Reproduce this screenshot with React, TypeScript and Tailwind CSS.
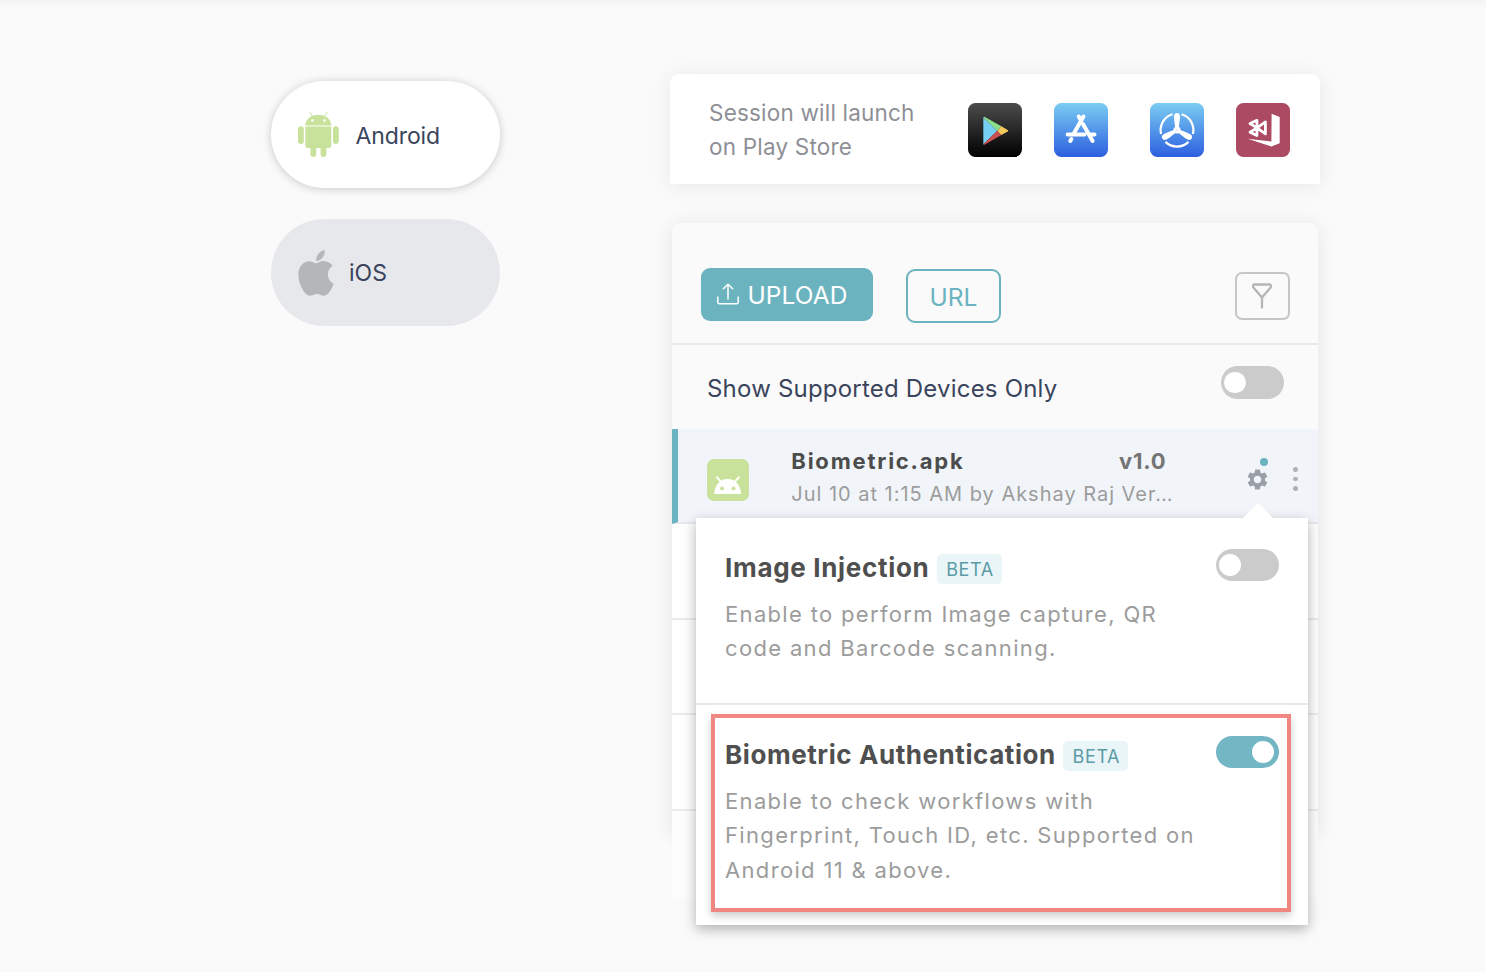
import React from "react";
import { MdSettings } from "react-icons/md";
import { FaApple } from "react-icons/fa";

function AndroidRobot() {
  return (
    <svg width="41" height="45" viewBox="0 0 41 45" fill="#c8e29b" className="shrink-0">
      <path d="M7.3 13.4C7.5 7 13 2.7 20.3 2.7S33.1 7 33.3 13.4Z" />
      <path d="M12 .4l2.3 3.8M29 .4l-2.3 3.8" stroke="#c8e29b" strokeWidth="1" strokeLinecap="round" />
      <path d="M7.3 14.5h26V33a3 3 0 0 1-3 3h-20a3 3 0 0 1-3-3Z" />
      <rect x="0" y="14.3" width="5.8" height="17.7" rx="2.9" />
      <rect x="35" y="14.3" width="5.8" height="17.7" rx="2.9" />
      <path d="M12.4 34h5.8v8a2.9 2.9 0 0 1-5.8 0ZM22.6 34h5.8v8a2.9 2.9 0 0 1-5.8 0Z" />
      <circle cx="14.3" cy="8.5" r="1.3" fill="#fff" />
      <circle cx="26.4" cy="8.5" r="1.3" fill="#fff" />
    </svg>
  );
}

function AndroidTile() {
  return (
    <svg width="42" height="42" viewBox="0 0 42 42" className="shrink-0">
      <rect width="42" height="42" rx="7" fill="#c8e29b" />
      <path d="M7.3 35C7.6 26 13 20 20.7 20S33.7 26 34 35Z" fill="#fff" />
      <path d="M9.8 18.2l4 4.4M31.9 18.2l-4 4.4" stroke="#fff" strokeWidth="2" strokeLinecap="round" />
      <circle cx="15" cy="29.4" r="1.9" fill="#c8e29b" />
      <circle cx="26.6" cy="29.4" r="1.9" fill="#c8e29b" />
    </svg>
  );
}

function PlayStore() {
  return (
    <svg width="54" height="54" viewBox="0 0 54 54">
      <defs>
        <linearGradient id="dark" x1="0" y1="0" x2="0" y2="1">
          <stop offset="0" stopColor="#4c4c4c" />
          <stop offset="1" stopColor="#000" />
        </linearGradient>
      </defs>
      <rect width="54" height="54" rx="7.5" fill="url(#dark)" />
      <path d="M15.3 14.2L29.3 27.7 15.3 41.4Z" fill="#76d0f1" />
      <path d="M15.3 14.2q.6-.9 1.6-.3L33.4 23.3 29.3 27.7Z" fill="#8bdf8b" />
      <path d="M15.3 41.2q.6.9 1.6.3L33.4 32.1 29.3 27.7Z" fill="#cb5051" />
      <path d="M33.4 23.3l6.3 3.6q1.2.8 0 1.6l-6.3 3.6-4.1-4.4Z" fill="#f3c95d" />
    </svg>
  );
}

function AppStore() {
  return (
    <svg width="54" height="54" viewBox="0 0 54 54">
      <defs>
        <linearGradient id="blueA" x1="0" y1="0" x2="0" y2="1">
          <stop offset="0" stopColor="#7acdf3" />
          <stop offset="1" stopColor="#2d5fe0" />
        </linearGradient>
      </defs>
      <rect width="54" height="54" rx="7.5" fill="url(#blueA)" />
      <path
        d="M13.6 31.5H30.5M37 31.5h3.5M29.5 13.6L19.8 30.4M17.4 36l-1.1 1.9M24.8 13.6l1.8 3.1M29 21l9.6 16.9"
        stroke="#fff"
        strokeWidth="4"
        strokeLinecap="round"
        fill="none"
      />
    </svg>
  );
}

function TestFlight() {
  const blade = "M25.5 27C25 21 23.9 17 24 13.2Q24.3 10 27 10T30 13.2C30.1 17 29 21 28.5 27Z";
  return (
    <svg width="54" height="54" viewBox="0 0 54 54">
      <defs>
        <linearGradient id="blueT" x1="0" y1="0" x2="0" y2="1">
          <stop offset="0" stopColor="#7acdf3" />
          <stop offset="1" stopColor="#2d5fe0" />
        </linearGradient>
      </defs>
      <rect width="54" height="54" rx="7.5" fill="url(#blueT)" />
      <g stroke="#fff" strokeWidth="2.2" fill="none">
        <path d="M38.5 38.9A16.4 16.4 0 0 1 15.5 38.9" />
        <path d="M11.1 31A16.4 16.4 0 0 1 22.5 11.3" />
        <path d="M31.5 11.3A16.4 16.4 0 0 1 42.9 31" />
      </g>
      <g fill="#fff">
        <path d={blade} />
        <path d={blade} transform="rotate(120 27 27)" />
        <path d={blade} transform="rotate(240 27 27)" />
        <circle cx="27" cy="27" r="3.6" />
      </g>
      <circle cx="27" cy="27" r="0.7" fill="#bcd3f7" />
    </svg>
  );
}

function AppCenter() {
  return (
    <svg width="54" height="54" viewBox="0 0 54 54">
      <rect width="54" height="54" rx="7.5" fill="#ac4a62" />
      <path d="M35.6 10.8L43.7 14v26.2L35.4 43.6 11.6 35.8 35.4 38.6Z" fill="#fff" />
      <path
        d="M21 24.9L29.4 18.9V30.9ZM21 24.9L20.9 17.3 14 20.6ZM21 24.9L20.9 32.5 14 29.2Z"
        stroke="#fff"
        strokeWidth="2.8"
        strokeLinejoin="round"
        fill="none"
      />
    </svg>
  );
}

function Toggle({ on = false }: { on?: boolean }) {
  return (
    <span
      className={`flex h-[32.5px] w-[63px] shrink-0 items-center rounded-full ${
        on ? "justify-end bg-[#73b6c4] pr-[5.5px]" : "justify-start bg-[#cbcbcb] pl-[3.4px]"
      }`}
    >
      <span className="size-[21.5px] rounded-full bg-white" />
    </span>
  );
}

function Feature({ title, on, spacing, lines }: { title: string; on: boolean; spacing: string; lines: string[] }) {
  return (
    <div className="pl-[29px] pr-[29px]">
      <div className="flex h-[33px] items-center">
        <h3 className={`whitespace-nowrap text-[26px] leading-[33px] font-bold text-[#4f4f4f] ${spacing}`}>{title}</h3>
        <span className="relative top-[2px] ml-[7.5px] flex h-[30.5px] w-[65px] items-center justify-center rounded-[5px] bg-[#eaf5f8] pt-[1.5px] pl-[1px] text-[18px] tracking-[0.6px] text-[#5b9ba6]">
          BETA
        </span>
        <div className="relative -top-[2px] ml-auto">
          <Toggle on={on} />
        </div>
      </div>
      <p className="mt-[13.5px] whitespace-nowrap text-[22px] leading-[34.4px] tracking-[1.33px] text-[#9c9c9c]">
        {lines.map((l) => (
          <span key={l} className="block">
            {l}
          </span>
        ))}
      </p>
    </div>
  );
}

export default function App() {
  return (
    <div className="relative h-[972px] w-[1486px] overflow-hidden bg-[#fafafa] font-['Inter',sans-serif]">
      <div className="absolute inset-x-0 top-0 h-2 bg-linear-to-b from-[#f3f3f3] to-[#fafafa]" />
      <div className="flex pl-[271px]">
        <nav className="mt-[81px] flex w-[229px] flex-col gap-[31px] text-[23px] text-[#3a445c]">
          <button className="flex h-[107px] items-center rounded-full bg-white pl-[27px] shadow-[0_1px_10px_rgba(0,0,0,0.2)]">
            <AndroidRobot />
            <span className="ml-[16.5px] pt-[3px] tracking-[-0.1px]">Android</span>
          </button>
          <button className="flex h-[107px] items-center rounded-full bg-[#e7e8ec] pl-[26.5px]">
            <FaApple preserveAspectRatio="none" className="h-[52px] w-[36px] shrink-0 text-[#b5b6ba]" />
            <span className="ml-[15.5px] pt-[2px]">iOS</span>
          </button>
        </nav>

        <main className="mt-[73.5px] ml-[170px] w-[650px]">
          <section className="flex h-[110.5px] rounded-t-[9px] bg-white pl-[39px] shadow-[0_2px_20px_rgba(0,0,0,0.08)]">
            <p className="w-[259px] pt-[22px] text-[22.5px] leading-[34.3px] tracking-[0.2px] text-[#8e8f96]">
              Session will launch
              <br />
              on Play Store
            </p>
            <div className="flex pt-[29.5px]">
              <PlayStore />
              <div className="ml-[32px]">
                <AppStore />
              </div>
              <div className="ml-[42px]">
                <TestFlight />
              </div>
              <div className="ml-[32px]">
                <AppCenter />
              </div>
            </div>
          </section>

          <section className="relative mt-[38.5px] ml-[2px] h-[612px] w-[646px] rounded-t-[9px] bg-[#fafafa] shadow-[0_2px_20px_rgba(0,0,0,0.09)]">
            <div className="flex h-[122.5px] items-start border-b-2 border-[#e8e8e8] pl-[29px]">
              <button className="mt-[45px] flex h-[53.5px] w-[172px] items-center rounded-[9px] bg-[#6cb3c0] pl-[16px] text-[24.5px] tracking-[0.1px] text-white">
                <svg width="22" height="22" viewBox="0 0 22 22" fill="none" stroke="#fff" strokeWidth="1.5" strokeLinecap="round" strokeLinejoin="round" className="-mt-[1px] shrink-0">
                  <path d="M.8 14v5.2q0 1.6 1.6 1.6h17.2q1.6 0 1.6-1.6V14M11 16V1.2M6.3 5.8L11 1.2l4.7 4.6" />
                </svg>
                <span className="ml-[8.5px] pt-[2px]">UPLOAD</span>
              </button>
              <button className="mt-[46.5px] ml-[33px] flex h-[54px] w-[95px] items-center justify-center rounded-[9px] border-2 border-[#6cb3c0] pt-[2px] text-[24.5px] text-[#6cb3c0]">
                URL
              </button>
              <button className="mt-[49.5px] ml-[234px] flex h-[48px] w-[55px] items-center justify-center rounded-[7px] border-2 border-[#c6c6c8]">
                <svg width="20" height="26" viewBox="0 0 20 26" fill="none" stroke="#b5b5b9" strokeWidth="2.3" strokeLinecap="round" strokeLinejoin="round" className="-ml-px">
                  <path d="M10 24.5V14.5L1.6 4.8Q-.2 1.8 2.4 1.5h15.2q2.6.3.8 3.3L10 14.5" />
                </svg>
              </button>
            </div>

            <div className="flex h-[84px] justify-between pt-[21px] pr-[34px] pl-[35px]">
              <span className="mt-[3px] h-[40px] text-[24px] leading-[40px] tracking-[0.2px] text-[#3a445c]">Show Supported Devices Only</span>
              <Toggle />
            </div>

            <div className="flex h-[95px] items-start border-b-2 border-l-[6px] border-b-[#e6e8ec] border-l-[#6cb3c0] bg-[#f1f5fa] pl-[29px]">
              <div className="mt-[30px]">
                <AndroidTile />
              </div>
              <div className="mt-[16px] ml-[42.3px] w-[383.7px] whitespace-nowrap leading-[32px]">
                <div className="flex justify-between pr-[8.5px] text-[22px] font-bold">
                  <span className="tracking-[1.78px] text-[#4c4c4c]">Biometric.apk</span>
                  <span className="tracking-[0.8px] text-[#747474]">v1.0</span>
                </div>
                <div className="pt-px text-[20px] tracking-[0.98px] text-[#9c9c9c]">Jul 10 at 1:15 AM by Akshay Raj Ver…</div>
              </div>
              <div className="relative mt-[38px] ml-[70px]">
                <MdSettings className="size-[25px] text-[#9ba0a8]" />
                <span className="absolute -top-[8.7px] left-[15px] size-[8px] rounded-full bg-[#6cb3c0]" />
              </div>
              <div className="mt-[38.3px] ml-[23px] flex flex-col gap-[4.5px]">
                <span className="size-[4.8px] rounded-full bg-[#b0b0b0]" />
                <span className="size-[4.8px] rounded-full bg-[#b0b0b0]" />
                <span className="size-[4.8px] rounded-full bg-[#b0b0b0]" />
              </div>
            </div>

            <div className="h-[95.5px] border-b-2 border-[#ebebeb] bg-[#fefefe]" />
            <div className="h-[95.5px] border-b-2 border-[#ebebeb] bg-[#fefefe]" />
            <div className="h-[95.5px] border-b-2 border-[#ebebeb] bg-[#fefefe]" />
            <div className="h-[86px] bg-[#fdfdfd]" />

            <div className="absolute top-[295px] left-[24px] h-[407px] w-[612px] bg-white shadow-[0_4px_12px_rgba(0,0,0,0.3)]">
              <svg width="32" height="16" viewBox="0 0 32 16" className="absolute -top-[15px] left-[546px]">
                <path d="M0 16L14.5 1.2Q16 0 17.5 1.2L32 16Z" fill="#fff" />
              </svg>
              <div className="h-[187.5px] border-b-2 border-[#e9e9e9] pt-[33px]">
                <Feature
                  title="Image Injection"
                  on={false}
                  spacing="tracking-[0.68px]"
                  lines={["Enable to perform Image capture, QR", "code and Barcode scanning."]}
                />
              </div>
              <div className="h-[219px] pt-[32.5px]">
                <Feature
                  title="Biometric Authentication"
                  on={true}
                  spacing="tracking-[0.57px]"
                  lines={["Enable to check workflows with", "Fingerprint, Touch ID, etc. Supported on", "Android 11 & above."]}
                />
              </div>
              <div className="pointer-events-none absolute top-[196.5px] left-[15px] h-[197.5px] w-[580px] border-4 border-[#f08682] shadow-[0_4px_8px_rgba(0,0,0,0.2)]" />
            </div>
          </section>
        </main>
      </div>
    </div>
  );
}
